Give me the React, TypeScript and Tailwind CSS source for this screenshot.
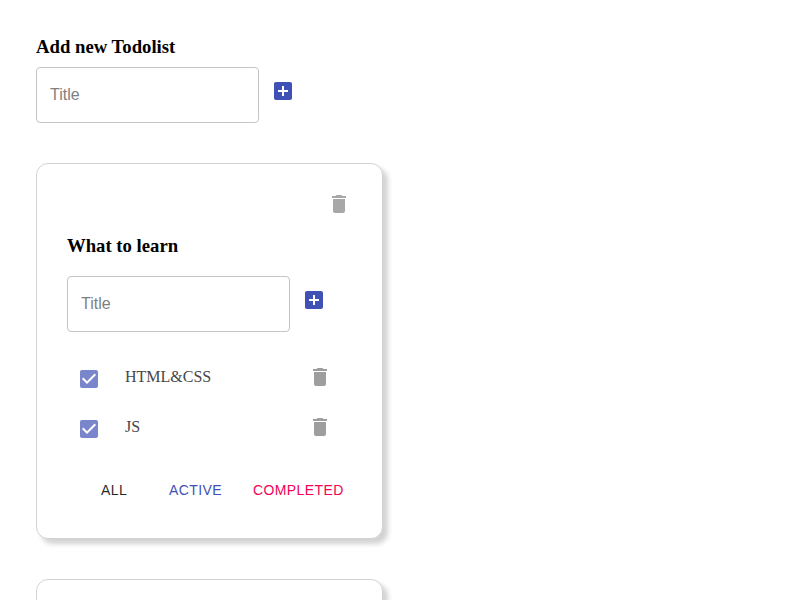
import React from "react";

const PATHS = {
  addBox:
    "M19 3H5c-1.11 0-2 .9-2 2v14c0 1.1.89 2 2 2h14c1.1 0 2-.9 2-2V5c0-1.1-.9-2-2-2zm-2 10h-4v4h-2v-4H7v-2h4V7h2v4h4v2z",
  trash: "M6 19c0 1.1.9 2 2 2h8c1.1 0 2-.9 2-2V7H6v12zM19 4h-3.5l-1-1h-5l-1 1H5v2h14V4z",
  checkBox:
    "M19 3H5c-1.11 0-2 .9-2 2v14c0 1.1.89 2 2 2h14c1.11 0 2-.9 2-2V5c0-1.1-.89-2-2-2zm-9 14l-5-5 1.41-1.41L10 14.17l7.59-7.59L19 8l-9 9z",
};

function Icon({ name, className }: { name: keyof typeof PATHS; className: string }) {
  return (
    <svg viewBox="0 0 24 24" fill="currentColor" className={`block size-6 ${className}`}>
      <path d={PATHS[name]} />
    </svg>
  );
}

function AddItemForm() {
  return (
    <div className="flex items-start">
      <input
        placeholder="Title"
        className="h-14 w-[223px] rounded border border-[#c4c4c4] bg-white pr-3 pb-px pl-[13px] font-['Liberation_Sans',Arial,sans-serif] text-base text-black outline-none placeholder:text-[#808080]"
      />
      <button className="p-3" aria-label="Add">
        <Icon name="addBox" className="text-[#3f51b5]" />
      </button>
    </div>
  );
}

function Task({ title }: { title: string }) {
  return (
    <div className="flex h-[50px] items-start text-[#474747]">
      <button className="px-[10px] pt-[13px]" aria-label="Toggle">
        <Icon name="checkBox" className="text-[#7986cb]" />
      </button>
      <span className="w-[183px] pt-[11px] pl-[14px] text-base leading-6">{title}</span>
      <button className="pt-[11px] pl-[14px]" aria-label="Delete">
        <Icon name="trash" className="text-[#9e9e9e]" />
      </button>
    </div>
  );
}

const CARD =
  "h-[376px] w-[347px] rounded-xl border border-[#d3d3d3] bg-white px-[30px] shadow-[5px_5px_5px_#d3d3d3]";

export default function App() {
  return (
    <div className="h-[600px] w-[800px] overflow-hidden bg-white pt-9 pl-9 font-['Liberation_Serif','Times_New_Roman',serif]">
      <h3 className="mb-[9px] text-[18.72px] leading-[22px] font-bold text-black">Add new Todolist</h3>
      <AddItemForm />
      <main className="mt-10 flex flex-col gap-10">
        <section className={CARD}>
          <div className="flex justify-end pt-7 pr-[1px]">
            <button aria-label="Delete list">
              <Icon name="trash" className="text-[#a8a8a8]" />
            </button>
          </div>
          <h3 className="mt-[19px] mb-[19px] text-[18.72px] leading-[22px] font-bold text-black">What to learn</h3>
          <AddItemForm />
          <div className="mt-[22px]">
            <Task title="HTML&CSS" />
            <Task title="JS" />
          </div>
          <div className="flex pt-[24px] pl-[34px] font-['Liberation_Sans',Arial,sans-serif] text-sm leading-6 tracking-[0.4px]">
            <button className="w-[68px] text-left text-black/87">ALL</button>
            <button className="w-[84px] text-left text-[#3f51b5]">ACTIVE</button>
            <button className="text-left text-[#f50057]">COMPLETED</button>
          </div>
        </section>
        <section className={CARD} />
      </main>
    </div>
  );
}
